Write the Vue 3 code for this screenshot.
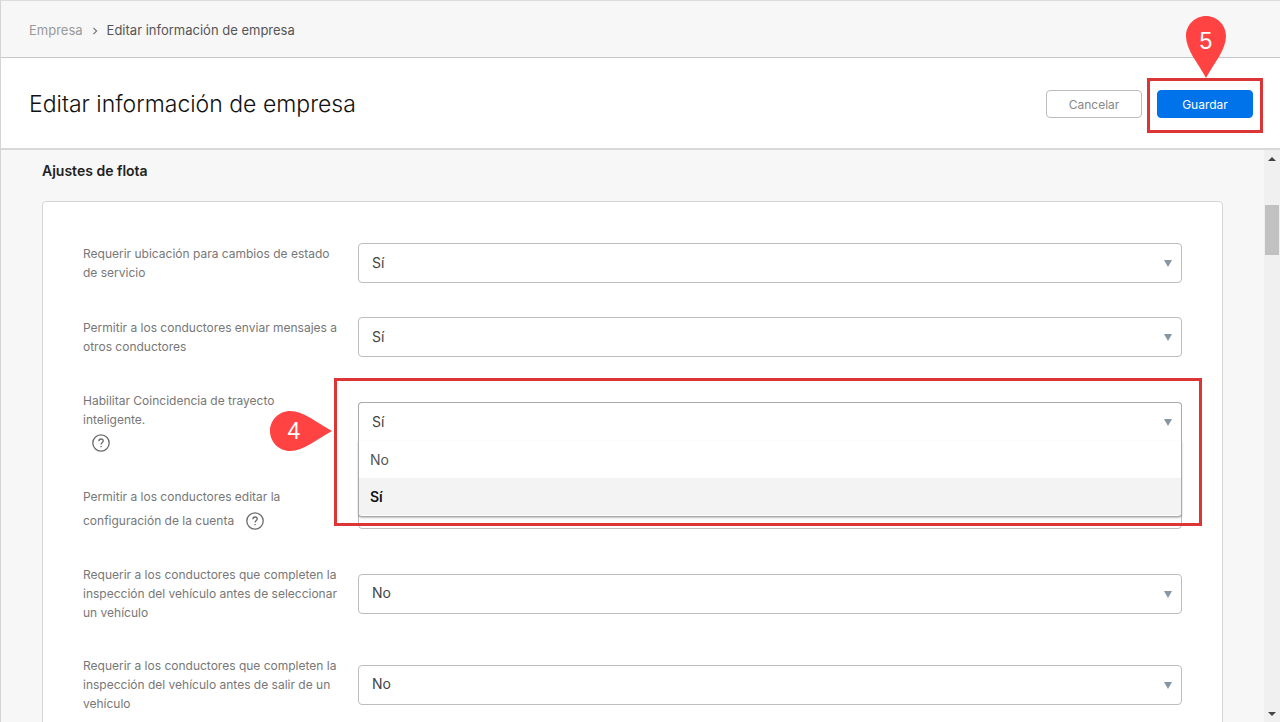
<template>
  <div class="page">
    <nav class="breadcrumb" aria-label="Ruta">
      <a href="#empresa">Empresa</a>
      <svg class="chevron" viewBox="0 0 6 8" aria-hidden="true">
        <path d="M1.5 0.8 L4.6 4 L1.5 7.2" />
      </svg>
      <span>Editar información de empresa</span>
    </nav>

    <header class="title-bar">
      <h1>Editar información de empresa</h1>
      <div class="actions">
        <button type="button" class="btn">Cancelar</button>
        <div class="save-wrap">
          <button type="button" class="btn primary">Guardar</button>
          <div class="highlight save-highlight"></div>
          <div class="marker marker-down">
            <svg viewBox="0 0 40 62" aria-hidden="true">
              <path d="M20 0 C31 0 40 9 40 20 C40 34 28 47 20 62 C12 47 0 34 0 20 C0 9 9 0 20 0 Z" />
            </svg>
            <span>5</span>
          </div>
        </div>
      </div>
    </header>

    <div class="body">
      <main class="content">
        <h2>Ajustes de flota</h2>
        <form class="card" @submit.prevent>
          <div v-for="field in fields" :key="field.id" class="field">
            <div class="field-label">
              <label :for="field.id">{{ field.label }}</label>
              <button
                v-if="field.help"
                type="button"
                class="help"
                :class="field.help"
                aria-label="Ayuda"
              >
                <svg viewBox="0 0 18 18" aria-hidden="true">
                  <circle cx="9" cy="9" r="8.2" />
                  <path d="M6.9 7.2 C6.9 5.8 7.8 5 9.1 5 C10.4 5 11.2 5.8 11.2 6.9 C11.2 8.4 9.1 8.5 9.1 10.4" />
                  <path d="M9.1 12 V13.3" />
                </svg>
              </button>
            </div>
            <div class="control" :class="{ open: openField === field.id }">
              <select :id="field.id" v-model="field.value">
                <option v-for="option in options" :key="option" :value="option">{{ option }}</option>
              </select>
              <svg class="caret" viewBox="0 0 8 7" aria-hidden="true">
                <path d="M0 0 H8 L4 7 Z" />
              </svg>

              <template v-if="openField === field.id">
                <ul class="options" role="listbox">
                  <li
                    v-for="option in options"
                    :key="option"
                    role="option"
                    :aria-selected="option === field.value"
                    :class="{ selected: option === field.value }"
                    @click="field.value = option"
                  >
                    {{ option }}
                  </li>
                </ul>
                <div class="highlight field-highlight"></div>
                <div class="marker marker-right">
                  <svg viewBox="0 0 62 40" aria-hidden="true">
                    <path d="M0 20 C0 9 9 0 20 0 C34 0 47 12 62 20 C47 28 34 40 20 40 C9 40 0 31 0 20 Z" />
                  </svg>
                  <span>4</span>
                </div>
              </template>
            </div>
          </div>
        </form>
      </main>

      <div class="scrollbar">
        <button type="button" aria-label="Subir">
          <svg viewBox="0 0 8 4" aria-hidden="true"><path d="M0 4 L4 0 L8 4 Z" /></svg>
        </button>
        <div class="track">
          <div class="thumb"></div>
        </div>
        <button type="button" aria-label="Bajar">
          <svg viewBox="0 0 8 4" aria-hidden="true"><path d="M0 0 H8 L4 4 Z" /></svg>
        </button>
      </div>
    </div>
  </div>
</template>

<script setup>
import { ref } from 'vue'

const options = ['No', 'Sí']
const openField = ref('trayecto')

const fields = ref([
  { id: 'ubicacion', label: 'Requerir ubicación para cambios de estado de servicio', value: 'Sí' },
  { id: 'mensajes', label: 'Permitir a los conductores enviar mensajes a otros conductores', value: 'Sí' },
  { id: 'trayecto', label: 'Habilitar Coincidencia de trayecto inteligente.', value: 'Sí', help: 'below' },
  { id: 'cuenta', label: 'Permitir a los conductores editar la configuración de la cuenta', value: 'No', help: 'inline' },
  { id: 'seleccionar', label: 'Requerir a los conductores que completen la inspección del vehículo antes de seleccionar un vehículo', value: 'No' },
  { id: 'salir', label: 'Requerir a los conductores que completen la inspección del vehículo antes de salir de un vehículo', value: 'No' }
])
</script>

<style>
body {
  margin: 0;
  background: #f7f7f7;
}
</style>

<style scoped>
.page {
  box-sizing: border-box;
  display: flex;
  flex-direction: column;
  height: 100vh;
  overflow: hidden;
  border-top: 1px solid #dcdcdc;
  border-left: 1px solid #d4d4d4;
  background: #f7f7f7;
  color: #222;
  font-family: Inter, "Liberation Sans", sans-serif;
}

button {
  padding: 0;
  font-family: inherit;
  cursor: pointer;
}

.breadcrumb {
  flex: none;
  display: flex;
  align-items: center;
  height: 54px;
  padding: 2px 28px 0;
  border-bottom: 1px solid #c8c8c8;
  font-size: 13px;
  color: #555;
}

.breadcrumb a {
  color: #999;
  text-decoration: none;
}

.chevron {
  width: 6px;
  height: 8px;
  margin: 2px 9px 0;
  fill: none;
  stroke: #777;
  stroke-width: 1.2;
}

.title-bar {
  flex: none;
  display: flex;
  align-items: center;
  justify-content: space-between;
  height: 88px;
  padding: 2px 27px 0 28px;
  border-bottom: 2px solid #d8d8d8;
  background: #fff;
}

h1 {
  margin: 0;
  font-size: 23px;
  font-weight: 300;
  line-height: 32px;
  color: #111;
}

.actions {
  display: flex;
  gap: 15px;
}

.btn {
  box-sizing: border-box;
  width: 96px;
  height: 28px;
  border: 1px solid #bdbdbd;
  border-radius: 4px;
  background: #fff;
  color: #888;
  font-size: 12px;
}

.btn.primary {
  border-color: #0073ea;
  background: #0073ea;
  color: #fff;
}

.save-wrap,
.control {
  position: relative;
}

.save-wrap {
  display: flex;
}

/* Step callouts */
.highlight {
  position: absolute;
  box-sizing: border-box;
  border: 3px solid #db3535;
  pointer-events: none;
}

.save-highlight {
  inset: -12px -10px -15px;
}

.field-highlight {
  inset: -24px -20px -84px -24px;
}

.marker {
  position: absolute;
  z-index: 3;
  color: #fff;
  font-family: "Liberation Sans", Arial, sans-serif;
  font-size: 23px;
}

.marker svg {
  display: block;
  width: 100%;
  height: 100%;
  fill: #ff4242;
}

.marker span {
  position: absolute;
  top: 0;
  left: 0;
  width: 40px;
  line-height: 40px;
  text-align: center;
}

.marker-down {
  top: -74px;
  left: 29px;
  width: 40px;
  height: 62px;
}

.marker-down span {
  line-height: 50px;
}

.marker-right {
  top: 9px;
  left: -88px;
  width: 62px;
  height: 40px;
}

.marker-right span {
  width: 48px;
}

.body {
  flex: 1;
  display: flex;
  min-height: 0;
}

.content {
  flex: 1;
  min-width: 0;
  padding: 11px 41px 0;
  overflow: hidden;
}

h2 {
  margin: 0 0 20px;
  font-size: 14px;
  font-weight: 600;
  line-height: 20px;
}

.card {
  display: flex;
  flex-direction: column;
  gap: 34px;
  padding: 41px 40px;
  border: 1px solid #d6d6d6;
  border-radius: 4px;
  background: #fff;
}

.field {
  display: grid;
  grid-template-columns: 256px 1fr;
  gap: 19px;
  align-items: center;
}

.field-label {
  color: #777;
  font-size: 12px;
  line-height: 19px;
}

.help {
  box-sizing: border-box;
  display: inline-flex;
  align-items: center;
  height: 24px;
  margin-left: 9px;
  padding-top: 4px;
  border: 0;
  background: none;
}

.help.below {
  display: flex;
}

.help.inline {
  height: 25px;
  margin-left: 12px;
  vertical-align: -5px;
}

.help svg {
  width: 18px;
  height: 18px;
  fill: none;
  stroke: #6b6b6b;
  stroke-width: 1.3;
}

select {
  box-sizing: border-box;
  display: block;
  width: 100%;
  height: 40px;
  padding: 0 40px 2px 13px;
  border: 1px solid #bdbdbd;
  border-radius: 4px;
  background: #fff;
  color: #444;
  font-family: inherit;
  font-size: 14px;
  appearance: none;
}

.caret {
  position: absolute;
  top: 17px;
  right: 10px;
  width: 8px;
  height: 7px;
  fill: #8796a3;
  pointer-events: none;
}

.control.open {
  z-index: 2;
}

.open select {
  border-color: #aaa;
  border-bottom-color: transparent;
  border-radius: 4px 4px 0 0;
}

.options {
  position: absolute;
  top: 39px;
  left: 0;
  right: 0;
  margin: 0;
  padding: 0 0 1px;
  border: 1px solid #aaa;
  border-top: 0;
  border-radius: 0 0 4px 4px;
  background: #fff;
  box-shadow: 0 1px 2px rgba(0, 0, 0, 0.25);
  color: #555;
  font-size: 14px;
  line-height: 37px;
  list-style: none;
}

.options li {
  padding: 0 11px;
}

.options .selected {
  background: #f3f3f3;
  color: #111;
  font-weight: 600;
}

.scrollbar {
  flex: none;
  display: flex;
  flex-direction: column;
  width: 16px;
  background: #f0f0f0;
}

.scrollbar button {
  display: flex;
  align-items: center;
  justify-content: center;
  height: 17px;
  border: 0;
  background: none;
}

.scrollbar svg {
  width: 8px;
  height: 4px;
  fill: #444;
}

.track {
  flex: 1;
  padding: 38px 1px 0;
}

.thumb {
  height: 50px;
  background: #c1c1c1;
}
</style>
